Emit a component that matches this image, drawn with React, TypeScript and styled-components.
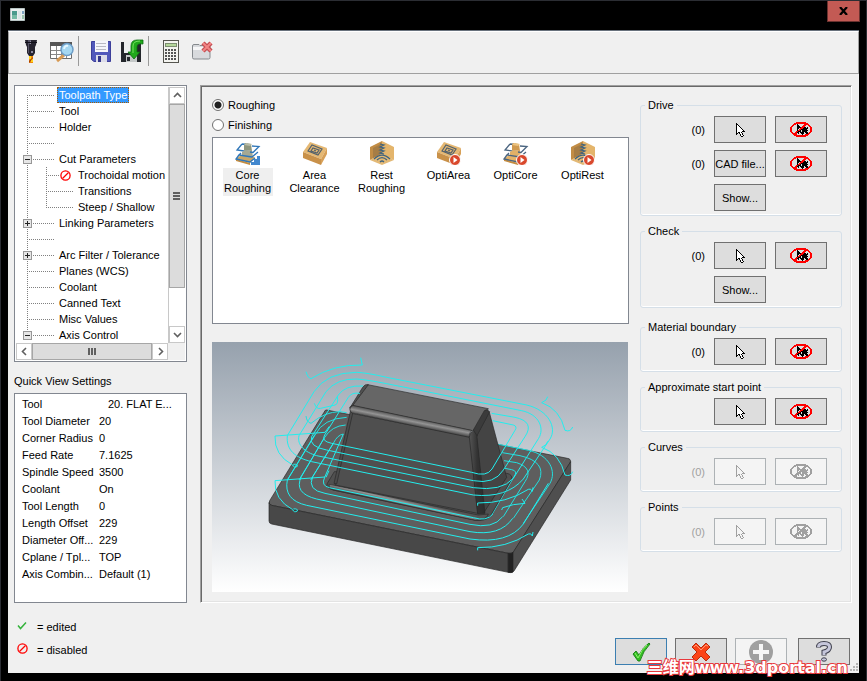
import React from "react";
import styled, { createGlobalStyle, css } from "styled-components";

const GlobalStyle = createGlobalStyle`
  * { box-sizing: border-box; }
  body {
    margin: 0;
    background: #000;
    color: #000;
    font: 11px/14px "Liberation Sans", Arial, sans-serif;
  }
  button { font: inherit; color: inherit; padding: 0; margin: 0; }
  svg { display: block; flex: none; }
`;

/* ---------- window frame ---------- */

const Window = styled.div`
  min-height: 100vh;
  display: flex;
  flex-direction: column;
  background: #000;
  border: 1px solid #2b2d33;
  border-bottom: 0;
  padding: 0 7px 8px;
`;

const TitleBar = styled.header`
  display: flex;
  justify-content: space-between;
  align-items: flex-start;
  height: 29px;
  padding-left: 2px;
  svg { margin-top: 7px; }
`;

const CloseButton = styled.button`
  width: 33px;
  height: 21px;
  display: grid;
  place-items: center;
  margin-right: -1px;
  border: 1px solid #6b322f;
  border-top: 0;
  background: #c35a54;
  && svg { margin: 0; }
`;

const Client = styled.main`
  position: relative;
  flex: 1;
  display: flex;
  flex-direction: column;
  background: #f0f0f0;
  border-top: 1px solid #68717c;
`;

/* ---------- toolbar ---------- */

const Toolbar = styled.div`
  display: flex;
  align-items: center;
  height: 43px;
  padding: 0 0 3px 6px;
  border-top: 1px solid #fff;
  border-left: 1px solid #a0a0a0;
  border-right: 1px solid #a0a0a0;
  border-bottom: 1px solid #a0a0a0;
`;

const ToolButton = styled.button`
  width: 31px;
  height: 30px;
  display: grid;
  place-items: center;
  border: 0;
  background: none;
`;

const ToolSeparator = styled.span`
  width: 1px;
  height: 30px;
  margin: 0 6px 0 1px;
  background: #9a9a9a;
`;

/* ---------- body ---------- */

const Body = styled.div`
  flex: 1;
  display: flex;
  gap: 13px;
  padding: 11px 7px 0 6px;
`;

const Sidebar = styled.aside`
  width: 173px;
  flex: none;
  display: flex;
  flex-direction: column;
`;

const Sunken = styled.div`
  background: #fff;
  border: 1px solid #828790;
`;

const TreeBox = styled(Sunken)`
  padding: 1px;
  display: grid;
  grid-template-columns: 1fr 17px;
`;

const TreeList = styled.ul`
  list-style: none;
  margin: 0;
  padding: 0;
  overflow: hidden;
`;

const TreeRow = styled.li`
  display: flex;
  height: 16px;
  line-height: 16px;
  white-space: nowrap;
`;

const dotsX = "repeating-linear-gradient(90deg, #808080 0 1px, transparent 1px 2px)";
const dotsY = "repeating-linear-gradient(180deg, #808080 0 1px, transparent 1px 2px)";

const Gutter = styled.span<{ $edge?: "first" | "last"; $child?: boolean; $childLast?: boolean }>`
  flex: none;
  width: ${p => (p.$child ? 60 : 41)}px;
  display: flex;
  align-items: center;
  padding-left: ${p => (p.$child ? 43 : 7)}px;
  background-repeat: no-repeat;
  ${p =>
    p.$child
      ? css`
          background-image: ${dotsX}, ${dotsY}, ${dotsY};
          background-position: 30px 8px, 30px 0, 11px 0;
          background-size: 27px 1px, 1px ${p.$childLast ? 8 : 16}px, 1px 16px;
        `
      : css`
          background-image: ${dotsX}, ${dotsY};
          background-position: 11px 8px, 11px ${p.$edge === "first" ? 8 : 0}px;
          background-size: 27px 1px, 1px ${p.$edge ? 8 : 16}px;
        `}
`;

const Expander = styled.button`
  width: 9px;
  height: 9px;
  display: grid;
  place-items: center;
  border: 1px solid #979797;
  background: #e6e6e6;
`;

const DisabledMark = styled.span`
  background: #fff;
  padding: 0 3px 0 1px;
  width: 17px;
`;

const TreeLabel = styled.span<{ $selected?: boolean }>`
  padding: 0 2px;
  ${p =>
    p.$selected &&
    css`
      background: #3399ff;
      color: #fff;
      outline: 1px dotted #a85a00;
      outline-offset: -1px;
    `}
`;

const ScrollTrack = styled.div<{ $horizontal?: boolean }>`
  display: flex;
  flex-direction: ${p => (p.$horizontal ? "row" : "column")};
  background: #fff;
  border: solid #c8c8c8;
  border-width: ${p => (p.$horizontal ? "0" : "0 0 0 1px")};
`;

const ScrollArrow = styled.button`
  flex: none;
  min-width: 16px;
  height: 17px;
  display: grid;
  place-items: center;
  background: #fff;
  border: 1px solid #c8c8c8;
`;

const Thumb = styled.div<{ $grow: number }>`
  flex: ${p => p.$grow};
  display: grid;
  place-items: center;
  background: #dcdcdc;
  border: 1px solid #a6a6a6;
`;

const ScrollRest = styled.div<{ $grow: number }>`
  flex: ${p => p.$grow};
`;

const ScrollCorner = styled.div`
  background: #f0f0f0;
`;

const SectionTitle = styled.h2`
  margin: 12px 0 5px;
  font: inherit;
`;

const QuickBox = styled(Sunken)`
  flex: 1;
  padding: 1px 4px 4px 7px;
`;

const QuickTable = styled.table`
  width: 100%;
  table-layout: fixed;
  border-collapse: collapse;
  th, td {
    height: 17px;
    padding: 0;
    text-align: left;
    font-weight: normal;
    white-space: nowrap;
  }
  th { width: 77px; }
`;

const Value = styled.td<{ $indent?: boolean }>`
  && { padding-left: ${p => (p.$indent ? 9 : 0)}px; }
`;

/* ---------- main panel ---------- */

const Panel = styled.section`
  flex: 1;
  min-width: 0;
  display: flex;
  gap: 11px;
  padding: 11px 9px 9px 11px;
  border: 1px solid;
  border-color: #a0a0a0 #fff #fff #a0a0a0;
  box-shadow: inset 1px 1px #696969, inset -1px -1px #e3e3e3;
`;

const Strategy = styled.div`
  flex: 1;
  min-width: 0;
  display: flex;
  flex-direction: column;
`;

const RadioLabel = styled.label`
  display: flex;
  align-items: center;
  gap: 4px;
  height: 20px;
  margin-top: -2px;
  margin-bottom: 2px;
`;

const Radio = styled.input`
  appearance: none;
  width: 12px;
  height: 12px;
  margin: 0;
  border: 1px solid #707070;
  border-radius: 50%;
  background: #fff;
  &:checked { background: radial-gradient(circle, #222 0 3px, #fff 4px); }
`;

const OperationList = styled(Sunken)`
  display: flex;
  align-items: flex-start;
  height: 187px;
  padding: 3px 1px;
`;

const Operation = styled.button`
  width: 67px;
  display: flex;
  flex-direction: column;
  align-items: center;
  gap: 3px;
  border: 0;
  background: none;
`;

const OperationName = styled.span<{ $selected?: boolean }>`
  min-width: 50px;
  padding: 1px 0;
  line-height: 13px;
  white-space: pre-line;
  background: ${p => (p.$selected ? "#efefef" : "none")};
`;

const Preview = styled.div`
  margin-top: 18px;
  height: 250px;
  margin-right: 1px;
  background: linear-gradient(#96a1ad, #fff);
  svg { width: 100%; height: 100%; }
`;

const Selections = styled.div`
  width: 202px;
  flex: none;
  display: flex;
  flex-direction: column;
  gap: 8px;
  padding-top: 1px;
`;

const Group = styled.fieldset<{ $spaced?: boolean; $tall?: boolean }>`
  min-width: 0;
  margin: ${p => (p.$spaced ? 4 : 0)}px 0 0;
  padding: 4px 14px ${p => (p.$tall ? 4 : 6)}px 4px;
  border: 1px solid #d5dfe8;
  border-radius: 3px;
  box-shadow: inset 0 -1px #fff;
  legend { padding: 0 3px; }
`;

const GroupGrid = styled.div`
  display: grid;
  grid-template-columns: 1fr 52px 52px;
  column-gap: 9px;
  row-gap: 7px;
  align-items: center;
`;

const Count = styled.span<{ $dim?: boolean }>`
  grid-column: 1;
  text-align: right;
  color: ${p => (p.$dim ? "#a0a0a0" : "#000")};
`;

const PushButton = styled.button<{ $primary?: boolean }>`
  width: 52px;
  height: 27px;
  display: grid;
  place-items: center;
  white-space: nowrap;
  background: #dddddd;
  border: 1px solid ${p => (p.$primary ? "#3c7fb1" : "#707070")};
  &:disabled {
    background: #f4f4f4;
    border-color: #adb2b5;
  }
`;

/* ---------- footer ---------- */

const Footer = styled.footer`
  display: flex;
  justify-content: space-between;
  height: 70px;
  padding: 12px 9px 0 9px;
`;

const KeyRow = styled.div`
  display: flex;
  align-items: center;
  gap: 9px;
  height: 23px;
  svg { margin-top: -2px; }
`;

const Actions = styled.div`
  display: flex;
  gap: 8px;
  padding-top: 23px;
`;

const HelpSlot = styled.div`
  margin-left: 3px;
`;

const Watermark = styled.div`
  position: absolute;
  right: 11px;
  bottom: -5px;
  font: bold 16px/20px "DejaVu Sans", "Noto Sans CJK SC", sans-serif;
  color: #fff;
  -webkit-text-stroke: 2px #e8383c;
  paint-order: stroke fill;
  white-space: nowrap;
  pointer-events: none;
`;

const Grip = styled.div`
  position: absolute;
  right: 1px;
  bottom: 1px;
`;

/* ---------- icons ---------- */

function PixelIcon({ rows, colors }: { rows: string[]; colors: Record<string, string> }) {
  const w = Math.max(...rows.map(r => r.length));
  return (
    <svg width={w} height={rows.length} shapeRendering="crispEdges" aria-hidden="true">
      {rows.flatMap((row, y) =>
        [...row].map((c, x) =>
          colors[c] ? <rect key={`${x}-${y}`} x={x} y={y} width="1" height="1" fill={colors[c]} /> : null
        )
      )}
    </svg>
  );
}

const arrowRows = [
  "X........",
  "XX.......",
  "XoX......",
  "XooX.....",
  "XoooX....",
  "XooooX...",
  "XoooooX..",
  "XooooooX.",
  "XoooooXXX",
  "XoXXoX...",
  "XX.XooX..",
  "X...XoX..",
  "....XooX.",
  ".....XX..",
];

const noArrowRows = [
  "......RRRRRRRRRR......",
  "....RRRRRRRRRRRRRR....",
  "...RRR.X......RRRRR...",
  "..RR...XX....RRR..RR..",
  ".RR....XXX..RRR....RR.",
  "RR.....XXXXRRRXX.X..RR",
  "RR.....XX.RRRXXXXX..RR",
  "RR.....X.RRXXXXXX...RR",
  "RR.....XRRX.XXXXXX..RR",
  "RR....RRXXX.XXXXX...RR",
  ".RR..RRXX.XXXX.XXX.RR.",
  "..RRRRR.X..XXX..XXRR..",
  "...RRRR.....X..RRRR...",
  "....RRRRRRRRRRRRRR....",
  "......RRRRRRRRRR......",
];

const Arrow = ({ dim }: { dim?: boolean }) => (
  <PixelIcon rows={arrowRows} colors={{ X: dim ? "#a0a0a0" : "#000", o: dim ? "#f4f4f4" : "#fff" }} />
);

const NoArrow = ({ dim }: { dim?: boolean }) => (
  <PixelIcon rows={noArrowRows} colors={{ X: dim ? "#a0a0a0" : "#000", R: dim ? "#a0a0a0" : "#ff0000" }} />
);

const NoSign = () => (
  <svg width="11" height="11" viewBox="0 0 11 11" fill="none" stroke="#f00" strokeWidth="1.3" aria-hidden="true">
    <circle cx="5.5" cy="5.5" r="4.6" />
    <path d="m2.5 8.5 6-6" />
  </svg>
);

const SmallCheck = () => (
  <svg width="11" height="9" viewBox="0 0 11 9" fill="none" stroke="#35b33c" strokeWidth="1.5" aria-hidden="true">
    <path d="m1 4.5 2.5 3L9 1.5" />
  </svg>
);

const Chevron = ({ d }: { d: string }) => (
  <svg width="9" height="9" viewBox="0 0 9 9" fill="none" stroke="#606060" strokeWidth="1.6" aria-hidden="true">
    <path d={d} />
  </svg>
);

const ThumbGrip = ({ d }: { d: string }) => (
  <svg width="8" height="8" viewBox="0 0 8 8" fill="#606060" shapeRendering="crispEdges" aria-hidden="true">
    <path d={d} />
  </svg>
);

const AppIcon = () => (
  <svg width="15" height="13" viewBox="0 0 15 13" aria-hidden="true">
    <path fill="#e9eeee" stroke="#b8c4c4" d="M.5.5h14v12H.5z" />
    <path fill="#4a9a8c" d="M2 3h5v8H2z" />
    <path fill="#75bba5" d="M2 7h5v4H2z" />
    <path fill="#dbe5e6" d="M8 3h3v8H8z" />
    <path fill="#7fa3c2" d="M12 3h2v3h-2z" />
    <path fill="#9cc4ac" d="M12 7h2v4h-2z" />
  </svg>
);

const ToolIcon = () => (
  <svg width="14" height="25" viewBox="0 0 14 25" aria-hidden="true">
    <path fill="#25232f" d="M1 1h12l-1 5-1 2v6l-2 3H5l-2-3V8L2 6z" />
    <path fill="#565366" d="M4 1h3v4H5v9H4z" />
    <path fill="#8f8ca0" d="M6 2h1v3H6zM7 12h2v2H7z" />
    <path fill="#11101a" d="M1 3h12v1H1z" />
    <path fill="#f08a0c" d="M5 17h4v7H5z" />
    <path fill="#ffd21c" d="M5 17h2v3H5zM7 20h2v3H7z" />
    <path fill="#a03c08" d="m5 22 4-4v1l-4 5z" />
  </svg>
);

const TableSearchIcon = () => (
  <svg width="25" height="23" viewBox="0 0 25 23" aria-hidden="true">
    <path fill="#fff" stroke="#6c6c6c" d="M1.500 2.500h21v16h-21z" />
    <path fill="#565656" d="M1 2h22v4H1z" />
    <path stroke="#888" d="M2 10.500h20M2 14.500h20M7.500 6v12M12.500 6v12M17.500 6v12" />
    <path stroke="#d79a54" strokeWidth="3" d="m8 21 7-6" />
    <circle cx="18" cy="9.500" r="6" fill="#a5d7f1" stroke="#6c9cc6" strokeWidth="1.5" />
    <path fill="none" stroke="#e6f7ff" strokeWidth="2" d="M15 9q1-4 4-3" />
  </svg>
);

const FloppyIcon = () => (
  <svg width="22" height="23" viewBox="0 0 22 23" aria-hidden="true">
    <path fill="#5158bb" stroke="#3d3f9a" d="M1.500 1.500h19v20H4l-2.500-2z" />
    <path fill="#f6f6fb" d="M5 1h13v11H5z" />
    <path stroke="#b9b9c3" d="M6 3.500h10M6 6.500h10M6 9.500h10" />
    <path fill="#dcdce8" d="M6 15h11v7H6z" />
    <path fill="#34368b" d="M8 16h3v6H8z" />
  </svg>
);

const FloppyArrowIcon = () => (
  <svg width="24" height="24" viewBox="0 0 24 24" aria-hidden="true">
    <path fill="#23262b" d="M1 3h20v20H1z" />
    <path fill="#eceeee" d="M4 3h12v11H4z" />
    <path fill="#c4c8c8" d="M6 16h11v7H6z" />
    <path fill="#23262b" d="M7 18h3v4H7z" />
    <path fill="#20a91c" stroke="#0b6d10" strokeWidth=".8" d="M23 1v4q-6-1-6 3v5h3l-6 7-6-7h3V7q0-6 6-6z" />
    <path fill="none" stroke="#75e35f" d="M20 2q-7 0-7 5v7" />
  </svg>
);

const CalculatorIcon = () => (
  <svg width="16" height="23" viewBox="0 0 16 23" shapeRendering="crispEdges" aria-hidden="true">
    <path fill="#f4f4f0" stroke="#55554f" d="M.5.5h15v22H.5z" />
    <path fill="#b4d69a" stroke="#7c8e70" d="M2.500 3.500h11v3h-11z" />
    <path stroke="#555" strokeWidth="2" strokeDasharray="2 1" d="M2 10h12M2 13h12M2 16h12M2 19h12" />
  </svg>
);

const FolderDeleteIcon = () => (
  <svg width="22" height="20" viewBox="0 0 22 20" aria-hidden="true">
    <path fill="#d8dadd" stroke="#85898d" d="M1.500 5q0-1.500 1.500-1.500h5l1 1h9q1 0 1 1v11q0 1.500-1.500 1.500H3q-1.500 0-1.500-1.500z" />
    <path fill="#f6f6f7" d="M2 6h16v3H2z" />
    <path stroke="#c44c50" strokeWidth="4.500" d="m12 2 8 8M20 2l-8 8" />
    <path stroke="#f28585" strokeWidth="2" d="m12 2 8 8M20 2l-8 8" />
  </svg>
);

const Badge = () => (
  <>
    <circle cx="19" cy="19" r="5.500" fill="#d9482c" stroke="#fff" />
    <path fill="#fff" d="m17.500 16 4 3-4 3z" />
  </>
);

type Kind = "core" | "area" | "rest";

function OperationIcon({ kind, opti }: { kind: Kind; opti?: boolean }) {
  const line = opti ? "#4b6580" : "#2f76b8";
  return (
    <svg width="26" height="24" viewBox="0 0 26 24" aria-hidden="true">
      {kind === "core" && (
        <>
          <path fill={opti ? "#e4b36a" : "#c9a667"} d="m1 18 5-4 14 2-5 6z" />
          <path fill="#c58c3f" d="m1 18 14 4v2L1 20z" />
          <path fill="none" stroke={line} strokeWidth="1.3" d="m4 14-3 4 14 3 5-4M7 3l6 .5M7 3 2 9l14 2" />
          <path fill={opti ? "#e2b067" : "#a5a893"} d="m7 11 3-2 7 1 1 6-4 1-7-2z" />
          <path fill={opti ? "#d09a50" : "#8e967f"} d="m9 4 1-2 6 1 1 7-8-1z" />
          <path fill={opti ? "#ecc381" : "#b8bba6"} d="m9 4 2-2 6 1-2 2z" />
          <path fill="none" stroke={line} strokeWidth="1.3" d="m17 5 7 .5-6 6-3-.5M6 12l-2 2 13 2 6-5" />
          {!opti && <path fill="#4288cf" d="M25 13v11h-9v-3h3v-3h3v-3h3z" />}
        </>
      )}
      {kind === "area" && (
        <>
          <path fill="#e5b873" d="m1 11 7-10 17 6-6 11z" />
          <path fill="#c99149" d="m1 11 18 7v6L1 17z" />
          <path fill="#d7a058" d="m19 18 6-11v6l-6 11z" />
          <g fill="none" stroke="#53616c" strokeWidth="1.200">
            <path d="m6 10 4-6 10 4-4 6zM9 10l2-3 6 2-2 3z" />
            <path d="m12 9 2 1" />
          </g>
        </>
      )}
      {kind === "rest" && (
        <>
          <path fill="#c28d45" d="M1 6 13 0v13L1 19z" />
          <path fill="#e4b56c" d="m13 0 12 6v13l-12-6z" />
          <path fill="#e3b976" d="m1 19 12-7 12 7-12 5z" />
          <path fill="#a67d45" d="m4 7 8-4v10l-8 4z" />
          <g fill="none" stroke="#40637d" strokeWidth="1.200">
            <path d="m11 3 4 1-4 2 4 1-4 2 4 1-4 2 4 1M5 18q8-8 16 0M8 19q5-5 10 0M11 21q2-2 4 0" />
          </g>
        </>
      )}
      {opti && <Badge />}
    </svg>
  );
}

const AcceptIcon = () => (
  <svg width="19" height="20" viewBox="0 0 19 20" aria-hidden="true">
    <path fill="#32bd21" stroke="#157c13" strokeWidth=".9" d="m1 12 3-3 3 4Q11 5 17 1l1 1Q11 9 8 19H6z" />
    <path fill="none" stroke="#8df36e" d="m3 11 3 5Q10 7 15 3" />
  </svg>
);

const CancelIcon = () => (
  <svg width="20" height="20" viewBox="0 0 20 20" aria-hidden="true">
    <path fill="#fb4317" stroke="#b92c0c" d="m1 5 4-4 5 5 5-5 4 4-5 5 5 5-4 4-5-5-5 5-4-4 5-5z" strokeLinejoin="round" />
    <path fill="none" stroke="#ff9573" d="m3 5 2-2 5 5 5-5 2 1" />
  </svg>
);

const AddIcon = () => (
  <svg width="24" height="24" viewBox="0 0 24 24" aria-hidden="true">
    <circle cx="12" cy="12" r="12" fill="#a0a0a0" />
    <path stroke="#f6f6f6" strokeWidth="4" d="M12 4v16M4 12h16" />
  </svg>
);

const HelpIcon = () => (
  <svg width="16" height="21" viewBox="0 0 16 21" fill="none" aria-hidden="true">
    <path stroke="#3d3e4c" strokeWidth="5" d="M2.500 6.500q0-4 5.500-4t5.500 3.500-5.500 5v3.500" />
    <path stroke="#c5c6da" strokeWidth="3" d="M2.500 6q0-3.500 5.500-3.500t5.500 3.500-5.500 5v3" />
    <ellipse cx="8" cy="18.500" rx="2.500" ry="1.700" fill="#c5c6da" stroke="#3d3e4c" />
  </svg>
);

/* ---------- toolpath preview ---------- */

const leads = (
  <>
    <path d="M375 292 225 303Q222 360 278 390q4 10 14 4q2-8-12-6" />
    <path d="M1043 185 1038 195 1025 203Q1080 222 1095 286Q1112 292 1118 276" />
    <path d="M833 512v-8Q920 505 985 463q8-4 12 6l2-12" />
  </>
);

const PartPreview = () => (
  <svg viewBox="36 21 1248 750" preserveAspectRatio="xMidYMid meet" role="img" aria-label="Core roughing preview">
    <defs>
      <linearGradient id="edge" gradientUnits="userSpaceOnUse" x1="640" y1="247" x2="635" y2="272">
        <stop offset="0" stopColor="#4c4c4c" />
        <stop offset=".5" stopColor="#949494" />
        <stop offset="1" stopColor="#444" />
      </linearGradient>
      <linearGradient id="foot" gradientUnits="userSpaceOnUse" x1="620" y1="494" x2="615" y2="514">
        <stop offset="0" stopColor="#555" />
        <stop offset=".5" stopColor="#949494" />
        <stop offset="1" stopColor="#555" />
      </linearGradient>
      <linearGradient id="corner" x1="0" x2="1">
        <stop offset="0" stopColor="#555" />
        <stop offset=".5" stopColor="#333" />
        <stop offset="1" stopColor="#2d2d2d" />
      </linearGradient>
    </defs>
    <g stroke="#262626" strokeWidth="2" strokeLinejoin="round">
      <path fill="#5e5e5e" d="M380 225 1102 370Q1114 372 1111 382L943 648Q938 658 925 655L215 511Q203 507 209 497L372 232Q375 224 380 225Z" />
      <path fill="#484848" d="M207 503Q208 509 215 511L925 655V712L215 567Q207 565 207 558Z" />
      <path fill="#4f4f4f" d="M938 654 1112 380V435L942 708Q938 714 925 712V655Z" />
      <path fill="#222" d="M925 655Q935 657 939 652V711Q933 714 925 712Z" />
    </g>
    <g fill="none" stroke="#22e0e0" strokeWidth="3">
      <path d="M262 435 345 300Q370 250 440 247" />
      <path d="M297 435 372 310Q395 272 437 270" />
      <path d="M332 435 400 325Q412 300 430 297" />
      <path d="M318 243Q320 262 333 265Q375 230 420 230L440 233" />
      <path d="M895 328 985 346C1050 360 1070 410 1050 445L970 565" />
      <path d="M907 353 960 362Q1040 380 1018 435L940 550" />
      <path d="M912 377 950 383Q1002 400 975 440L910 545" />
      <path d="M915 400 935 404Q955 408 942 425L875 540" />
    </g>
    <g stroke="#292929" strokeWidth="2" strokeLinejoin="round">
      <path fill="#505050" d="M403 410 382 445Q375 458 400 465L825 556Q855 559 870 545L935 433Q938 418 920 415Z" />
      <path fill="url(#foot)" d="M388 448 835 540 865 537Q860 557 825 555L400 465Q384 461 388 448Z" />
      <path fill="#666" d="M503 149 865 221 820 288 455 212Z" />
      <path fill="#4f4f4f" d="M455 235 810 305 833 535 405 450Z" />
      <path fill="#4b4b4b" d="M452 225 458 235 410 447 402 445Z" />
      <path fill="url(#edge)" d="M458 211 815 286Q805 296 808 307L457 234Q442 225 458 211Z" />
      <path fill="#505050" d="M488 157Q495 146 505 149L458 212Q448 214 449 220Z" />
      <path fill="#444" d="M868 232 920 427 852 532 829 302Z" />
      <path fill="url(#corner)" d="M808 307Q810 287 824 288Q834 293 831 307L855 535 833 537Z" />
      <path fill="#3b3b3b" d="M820 285 853 227Q860 220 869 230L831 302Z" />
    </g>
    <g fill="none" stroke="#22eeee" strokeWidth="3" strokeLinejoin="round">
      <path d="M262 302 342 170Q380 112 470 112Q500 113 560 127L980 210C1045 225 1072 278 1050 312L970 432Q920 490 820 480L335 380C285 368 258 345 262 302Z" />
      <path d="M297 302 378 170Q410 130 470 132Q500 134 560 146L965 227C1018 238 1034 280 1016 310L940 430Q905 470 820 458L350 362C315 352 290 330 297 302Z" />
      <path d="M489 153Q435 150 415 180L335 305Q325 335 380 345L820 437Q883 449 910 405L975 305Q1005 260 945 247L875 235" />
      <path d="M480 175Q455 171 445 187L374 300Q362 318 395 325L815 412Q860 427 876 402L945 286Q953 274 940 270L878 257" />
      <path d="M262 435Q250 495 320 511L810 612Q925 628 970 567L1045 445" />
      <path d="M345 298 262 435M372 310 304 425Q280 475 350 492L810 590Q900 605 938 550" />
      <path d="M400 325 338 425Q320 465 375 475L810 568Q880 583 908 545" />
      <path d="M430 297 374 427Q362 452 388 458L820 548Q860 560 878 538" />
      <path d="M318 110Q324 130 333 131Q400 88 487 90L482 68" />
      <path d="M343 205Q350 224 362 220L405 210Q416 208 412 185M375 292l13-18M378 427l9-20" />
      <path d="M905 525 908 518 940 509 975 505 966 492" />
      {leads}
      <g transform="translate(0 134)">{leads}</g>
    </g>
  </svg>
);

/* ---------- data ---------- */

type Node = { text: string; box?: "+" | "-"; child?: boolean; last?: boolean; off?: boolean; selected?: boolean };

const nodes: Node[] = [
  { text: "Toolpath Type", selected: true },
  { text: "Tool" },
  { text: "Holder" },
  { text: "" },
  { text: "Cut Parameters", box: "-" },
  { text: "Trochoidal motion", child: true, off: true },
  { text: "Transitions", child: true },
  { text: "Steep / Shallow", child: true, last: true },
  { text: "Linking Parameters", box: "+" },
  { text: "" },
  { text: "Arc Filter / Tolerance", box: "+" },
  { text: "Planes (WCS)" },
  { text: "Coolant" },
  { text: "Canned Text" },
  { text: "Misc Values" },
  { text: "Axis Control", box: "-" },
];

const settings = [
  ["Tool", "20. FLAT E..."],
  ["Tool Diameter", "20"],
  ["Corner Radius", "0"],
  ["Feed Rate", "7.1625"],
  ["Spindle Speed", "3500"],
  ["Coolant", "On"],
  ["Tool Length", "0"],
  ["Length Offset", "229"],
  ["Diameter Off...", "229"],
  ["Cplane / Tpl...", "TOP"],
  ["Axis Combin...", "Default (1)"],
];

const operations: { name: string; kind: Kind; opti?: boolean }[] = [
  { name: "Core\nRoughing", kind: "core" },
  { name: "Area\nClearance", kind: "area" },
  { name: "Rest\nRoughing", kind: "rest" },
  { name: "OptiArea", kind: "area", opti: true },
  { name: "OptiCore", kind: "core", opti: true },
  { name: "OptiRest", kind: "rest", opti: true },
];

type GroupRow = { count?: string; action: "pick" | "cad" | "show" };

const groups: { title: string; rows: GroupRow[]; disabled?: boolean; spaced?: boolean }[] = [
  { title: "Drive", rows: [{ count: "(0)", action: "pick" }, { count: "(0)", action: "cad" }, { action: "show" }] },
  { title: "Check", rows: [{ count: "(0)", action: "pick" }, { action: "show" }] },
  { title: "Material boundary", rows: [{ count: "(0)", action: "pick" }], spaced: true },
  { title: "Approximate start point", rows: [{ action: "pick" }] },
  { title: "Curves", rows: [{ count: "(0)", action: "pick" }], disabled: true },
  { title: "Points", rows: [{ count: "(0)", action: "pick" }], disabled: true },
];

/* ---------- parts ---------- */

const Tree = () => (
  <TreeBox>
    <TreeList>
      {nodes.map((n, i) => (
        <TreeRow key={i}>
          <Gutter
            $child={n.child}
            $childLast={n.last}
            $edge={i === 0 ? "first" : i === nodes.length - 1 ? "last" : undefined}
          >
            {n.box && (
              <Expander aria-label={n.box === "+" ? `Expand ${n.text}` : `Collapse ${n.text}`}>
                <svg width="5" height="5" fill="#222" shapeRendering="crispEdges" aria-hidden="true">
                  <path d={n.box === "+" ? "M0 2h5v1H0zM2 0h1v5H2z" : "M0 2h5v1H0z"} />
                </svg>
              </Expander>
            )}
            {n.off && (
              <DisabledMark>
                <NoSign />
              </DisabledMark>
            )}
          </Gutter>
          {n.text && <TreeLabel $selected={n.selected}>{n.text}</TreeLabel>}
        </TreeRow>
      ))}
    </TreeList>
    <ScrollTrack>
      <ScrollArrow aria-label="Scroll up"><Chevron d="m1 6 3.500-3.500L8 6" /></ScrollArrow>
      <Thumb $grow={183}><ThumbGrip d="M0 0h7v2H0zM0 3h7v2H0zM0 6h7v2H0z" /></Thumb>
      <ScrollRest $grow={38} />
      <ScrollArrow aria-label="Scroll down"><Chevron d="m1 3 3.500 3.500L8 3" /></ScrollArrow>
    </ScrollTrack>
    <ScrollTrack $horizontal>
      <ScrollArrow aria-label="Scroll left"><Chevron d="M6 1 2.500 4.500 6 8" /></ScrollArrow>
      <Thumb $grow={1}><ThumbGrip d="M0 0h2v7H0zM3 0h2v7H3zM6 0h2v7H6z" /></Thumb>
      <ScrollArrow aria-label="Scroll right"><Chevron d="m3 1 3.500 3.500L3 8" /></ScrollArrow>
    </ScrollTrack>
    <ScrollCorner />
  </TreeBox>
);

function SelectionGroup({ title, rows, disabled, spaced }: (typeof groups)[number]) {
  return (
    <Group $spaced={spaced} $tall={rows.length > 1}>
      <legend>{title}</legend>
      <GroupGrid>
        {rows.map((r, i) => (
          <React.Fragment key={i}>
            <Count $dim={disabled}>{r.count}</Count>
            <PushButton disabled={disabled} aria-label={r.action === "pick" ? `Select ${title}` : undefined}>
              {r.action === "pick" ? <Arrow dim={disabled} /> : r.action === "cad" ? "CAD file..." : "Show..."}
            </PushButton>
            {r.action !== "show" && (
              <PushButton disabled={disabled} aria-label={`Clear ${title}`}>
                <NoArrow dim={disabled} />
              </PushButton>
            )}
          </React.Fragment>
        ))}
      </GroupGrid>
    </Group>
  );
}

export default function App() {
  return (
    <>
      <GlobalStyle />
      <Window>
        <TitleBar>
          <AppIcon />
          <CloseButton aria-label="Close">
            <svg width="9" height="8" viewBox="0 0 9 8" stroke="#000" strokeWidth="2.200" aria-hidden="true">
              <path d="m1 0 7 8M8 0 1 8" />
            </svg>
          </CloseButton>
        </TitleBar>
        <Client>
          <Toolbar>
            <ToolButton aria-label="Tool"><ToolIcon /></ToolButton>
            <ToolButton aria-label="Find in table"><TableSearchIcon /></ToolButton>
            <ToolSeparator />
            <ToolButton aria-label="Save"><FloppyIcon /></ToolButton>
            <ToolButton aria-label="Load"><FloppyArrowIcon /></ToolButton>
            <ToolSeparator />
            <ToolButton aria-label="Calculator"><CalculatorIcon /></ToolButton>
            <ToolButton aria-label="Delete"><FolderDeleteIcon /></ToolButton>
          </Toolbar>
          <Body>
            <Sidebar>
              <Tree />
              <SectionTitle>Quick View Settings</SectionTitle>
              <QuickBox>
                <QuickTable>
                  <tbody>
                    {settings.map(([name, value], i) => (
                      <tr key={name}>
                        <th scope="row">{name}</th>
                        <Value $indent={i === 0}>{value}</Value>
                      </tr>
                    ))}
                  </tbody>
                </QuickTable>
              </QuickBox>
            </Sidebar>
            <Panel>
              <Strategy>
                <RadioLabel>
                  <Radio type="radio" name="strategy" defaultChecked />
                  Roughing
                </RadioLabel>
                <RadioLabel>
                  <Radio type="radio" name="strategy" />
                  Finishing
                </RadioLabel>
                <OperationList>
                  {operations.map((o, i) => (
                    <Operation key={o.name}>
                      <OperationIcon kind={o.kind} opti={o.opti} />
                      <OperationName $selected={i === 0}>{o.name}</OperationName>
                    </Operation>
                  ))}
                </OperationList>
                <Preview><PartPreview /></Preview>
              </Strategy>
              <Selections>
                {groups.map(g => (
                  <SelectionGroup key={g.title} {...g} />
                ))}
              </Selections>
            </Panel>
          </Body>
          <Footer>
            <div>
              <KeyRow><SmallCheck />= edited</KeyRow>
              <KeyRow><NoSign />= disabled</KeyRow>
            </div>
            <Actions>
              <PushButton $primary aria-label="OK"><AcceptIcon /></PushButton>
              <PushButton aria-label="Cancel"><CancelIcon /></PushButton>
              <PushButton disabled aria-label="Add"><AddIcon /></PushButton>
              <HelpSlot>
                <PushButton aria-label="Help"><HelpIcon /></PushButton>
              </HelpSlot>
            </Actions>
          </Footer>
          <Grip>
            <svg width="9" height="9" fill="#b4b4b4" shapeRendering="crispEdges" aria-hidden="true">
              <path d="M7 0h2v2H7zM4 3h2v2H4zM7 3h2v2H7zM1 6h2v2H1zM4 6h2v2H4zM7 6h2v2H7z" />
            </svg>
          </Grip>
          <Watermark>三维网www.3dportal.cn</Watermark>
        </Client>
      </Window>
    </>
  );
}
